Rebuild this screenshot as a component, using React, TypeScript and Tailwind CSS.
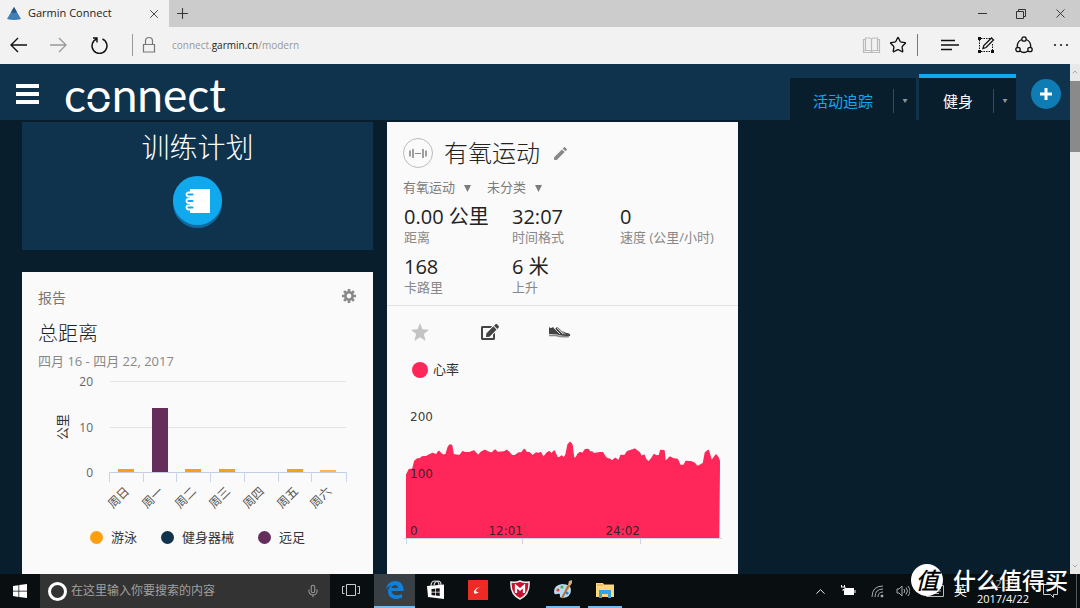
import type { ReactNode } from "react";
import { ChevronDown, ChevronUp, Mic, Plus, Star, X } from "lucide-react";
import { FaEdit } from "react-icons/fa";
import { MdEdit } from "react-icons/md";

const WEEK_DAYS = ["周日", "周一", "周二", "周三", "周四", "周五", "周六"];
const WEEK_TICKS = [87, 121, 154, 188, 222, 256, 289, 324];
const WEEK_BARS = [
  { x: 96, height: 3, color: "#ff9e0f" },
  { x: 130, height: 64, color: "#652d5c" },
  { x: 163, height: 3, color: "#ff9e0f" },
  { x: 197, height: 3, color: "#ff9e0f" },
  { x: 265, height: 3, color: "#ff9e0f" },
  { x: 298, height: 2, color: "#ffb54d" },
];

const WEEK_LEGEND = [
  { label: "游泳", dot: "bg-[#ff9e0f]" },
  { label: "健身器械", dot: "bg-[#10324b]" },
  { label: "远足", dot: "bg-[#652d5c]" },
];

const STATS = [
  { value: "0.00 公里", label: "距离" },
  { value: "32:07", label: "时间格式" },
  { value: "0", label: "速度 (公里/小时)" },
  { value: "168", label: "卡路里" },
  { value: "6 米", label: "上升" },
];

const HEART_RATE =
  "80,524 88,508 98,508 104,484 112,477 120,476 126,471 140,469 150,464 158,460 164,463 170,463 176,454 184,461 190,466 198,463 204,443 209,435 215,436 220,464 234,466 240,466 248,455 254,458 270,457 282,453 288,460 295,467 302,458 314,451 322,455 330,458 336,459 345,450 352,457 372,456 380,451 388,458 396,467 406,466 416,459 424,459 433,448 440,458 448,458 458,467 468,459 474,461 482,458 490,473 500,460 508,455 514,462 523,453 532,473 540,472 545,468 552,474 558,464 564,434 570,427 576,434 581,474 588,474 594,462 600,458 608,460 616,449 624,448 630,456 636,456 642,461 660,458 668,458 676,471 682,476 690,478 696,483 706,475 716,483 723,466 734,467 742,455 758,450 764,447 772,453 778,458 784,470 792,465 798,479 806,486 814,477 822,464 830,468 838,466 842,451 852,452 856,487 862,479 870,471 878,476 892,478 900,496 912,496 918,484 936,486 944,490 952,500 960,496 970,490 976,458 985,451 990,468 994,483 1000,476 1008,465 1014,472 1018,484";

function TabStrip() {
  return (
    <div className="flex h-[27px] shrink-0 bg-[#ccc]">
      <div className="flex w-[169px] items-center bg-[#f2f2f2] pl-[7px] pr-2">
        <svg width="14" height="13" viewBox="0 0 14 13" aria-hidden>
          <path d="M7 0 14 12Q7 14 0 12Z" fill="#3f7fb8" />
          <path d="M7 0 10 5Q7 7 4 5Z" fill="#28598c" />
        </svg>
        <span className="ml-[7px] flex-1 text-[11px] text-[#222]">Garmin Connect</span>
        <button type="button" aria-label="Close tab">
          <X size={14} strokeWidth={1.5} color="#333" />
        </button>
      </div>
      <button type="button" aria-label="New tab" className="ml-[5px]">
        <Plus size={17} strokeWidth={1.5} color="#333" />
      </button>
      <div className="ml-auto flex items-center gap-[27px] pr-3.5">
        <button type="button" aria-label="Minimize" className="w-3">
          <svg width="12" height="12" viewBox="0 0 12 12" stroke="#333" aria-hidden>
            <path d="M2 5.500h9" />
          </svg>
        </button>
        <button type="button" aria-label="Restore" className="w-3">
          <svg width="12" height="12" viewBox="0 0 12 12" fill="none" stroke="#333" aria-hidden>
            <path d="M1.500 3.500h7v7h-7zM3.500 3.500v-2h7v7h-2" />
          </svg>
        </button>
        <button type="button" aria-label="Close" className="flex w-3 justify-center">
          <X size={15} strokeWidth={1.5} color="#333" className="shrink-0" />
        </button>
      </div>
    </div>
  );
}

function AddressBar() {
  return (
    <div className="flex h-[37px] shrink-0 items-center bg-[#f2f2f2] pb-px pl-[9px] pr-[11px]">
      <button type="button" aria-label="Back">
        <svg width="19" height="18" viewBox="0 0 19 18" fill="none" stroke="#111" strokeWidth="1.400" aria-hidden>
          <path d="M18 9H2M9 2 2 9l7 7" />
        </svg>
      </button>
      <button type="button" aria-label="Forward" className="ml-[21px]">
        <svg width="19" height="18" viewBox="0 0 19 18" fill="none" stroke="#999" strokeWidth="1.300" aria-hidden>
          <path d="M1 9h16M10 2l7 7-7 7" />
        </svg>
      </button>
      <button type="button" aria-label="Refresh" className="ml-[22px]">
        <svg width="19" height="19" viewBox="0 0 19 19" fill="none" stroke="#111" strokeWidth="1.400" aria-hidden>
          <path d="M12.500 3A7.500 7.500 0 1 1 6.500 3M3 2h4v4.500" />
        </svg>
      </button>
      <span className="ml-[23px] h-[22px] w-px bg-[#999]" />
      <svg className="ml-[9px]" width="14" height="18" viewBox="0 0 14 18" fill="none" stroke="#777" strokeWidth="1.200" aria-hidden>
        <path d="M1.500 8.500h11v7.500h-11zM3.500 8.500V5q0-3.500 3.500-3.500T10.500 5v3.500" />
      </svg>
      <button type="button" className="ml-4 flex-1 text-left text-[10px] text-[#999]">
        connect.<span className="text-[#222]">garmin.cn</span>/modern
      </button>
      <button type="button" aria-label="Reading view">
        <svg width="19" height="18" viewBox="0 0 19 18" fill="none" stroke="#bbb" strokeWidth="1.200" aria-hidden>
          <path d="M1.500 3.500h2v11h-2zM15.500 3.500h2v11h-2M3.500 2h4q2 0 2 2v12q0-1.500-2-1.500h-4zM15.500 2h-4q-2 0-2 2v12q0-1.500 2-1.500h4zM1.500 14.500v2h16v-2" />
        </svg>
      </button>
      <button type="button" aria-label="Favorite" className="ml-2">
        <Star size={18} strokeWidth={1.8} strokeLinejoin="miter" color="#111" />
      </button>
      <span className="ml-2.5 h-[22px] w-px bg-[#777]" />
      <button type="button" aria-label="Hub" className="ml-[23px]">
        <svg width="18" height="18" viewBox="0 0 18 18" stroke="#111" strokeWidth="1.300" aria-hidden>
          <path d="M0 4.500h14M0 9h18M0 13.500h11" />
        </svg>
      </button>
      <button type="button" aria-label="Web note" className="ml-[18px]">
        <svg width="18" height="18" viewBox="0 0 18 18" fill="none" stroke="#111" aria-hidden>
          <path d="M2.500 4v11M15.500 8v7M4 2.500h9M4 15.500h10" strokeDasharray="1.500 1" />
          <path d="M6 12.500l.8-3L14.500 2l2 2-7.500 7.500z" strokeWidth="1.300" />
          <path d="M1 1h3v3H1zM1 14h3v3H1zM14 14h3v3h-3z" fill="#111" stroke="none" />
        </svg>
      </button>
      <button type="button" aria-label="Share" className="ml-5">
        <svg width="18" height="18" viewBox="0 0 18 18" fill="none" stroke="#111" strokeWidth="1.300" aria-hidden>
          <circle cx="9" cy="3" r="2.200" />
          <circle cx="3" cy="13.500" r="2.200" />
          <circle cx="15" cy="13.500" r="2.200" />
          <path d="M6.700 3.500Q2 5.500 2.300 11M11.300 3.500Q16 5.500 15.700 11M5 15q4 3 8 0" />
        </svg>
      </button>
      <button type="button" aria-label="More" className="ml-5">
        <svg width="16" height="4" viewBox="0 0 16 4" fill="#222" aria-hidden>
          <circle cx="2" cy="2" r="1.100" />
          <circle cx="8" cy="2" r="1.100" />
          <circle cx="14" cy="2" r="1.100" />
        </svg>
      </button>
    </div>
  );
}

function DashboardTab({ label, active }: { label: string; active?: boolean }) {
  return (
    <div
      className={
        active
          ? "flex h-[46px] items-center border-t-4 border-[#11a9ed] bg-[#091e2c] pl-6 pt-1"
          : "mr-[3px] flex h-[42px] items-center bg-[#091e2c] pl-[23px] pt-1"
      }
    >
      <a href="#dashboard" className={active ? "text-[15px] text-white" : "text-[15px] text-[#11a9ed]"}>
        {label}
      </a>
      <span className="ml-5 h-6 w-px bg-[#3b4a55]" />
      <button type="button" aria-label={`${label}选项`} className="w-[22px] text-[5px] text-[#8b979f]">
        ▼
      </button>
    </div>
  );
}

function Header() {
  return (
    <header className="flex h-14 shrink-0 items-end bg-[#0f334c] pr-[9px]">
      <button type="button" aria-label="菜单" className="mb-4 ml-4 flex w-[23px] flex-col gap-1">
        <span className="h-1 bg-white" />
        <span className="h-1 bg-white" />
        <span className="h-1 bg-white" />
      </button>
      <a href="#home" className="ml-[25px] font-['Lato',sans-serif] text-[46px] leading-[50px] text-white">
        c
        <span className="relative">
          o
          <span className="absolute inset-x-0 top-8 h-[3px] bg-[#0f334c]" />
        </span>
        nnect
      </a>
      <nav className="ml-auto flex items-end">
        <DashboardTab label="活动追踪" />
        <DashboardTab label="健身" active />
      </nav>
      <button
        type="button"
        aria-label="添加"
        className="mb-[11px] ml-[15px] flex size-[30px] items-center justify-center rounded-full bg-[#0f7db3]"
      >
        <svg width="12" height="12" viewBox="0 0 12 12" stroke="#fff" strokeWidth="3" aria-hidden>
          <path d="M6 0v12M0 6h12" />
        </svg>
      </button>
    </header>
  );
}

function TrainingCard() {
  return (
    <section className="flex h-32 flex-col items-center bg-[#0f334c] pt-[7px]">
      <h2 className="text-[28px] font-light leading-9 text-white">训练计划</h2>
      <button
        type="button"
        aria-label="训练计划"
        className="mt-[11px] flex size-[49px] items-center justify-center rounded-full bg-[#11a9ed] shadow-[0_3px_0_#1269a0]"
      >
        <svg width="26" height="26" viewBox="0 0 26 26" aria-hidden>
          <path d="M5 1h20v24H5z" fill="#fff" />
          <g fill="#11a9ed" stroke="#fff" strokeWidth="1.800">
            <rect x="1.500" y="4.500" width="8" height="4" rx="2" />
            <rect x="1.500" y="11" width="8" height="4" rx="2" />
            <rect x="1.500" y="17.500" width="8" height="4" rx="2" />
          </g>
        </svg>
      </button>
    </section>
  );
}

function WeekChart() {
  return (
    <svg className="mt-0.5 h-[150px] w-full" viewBox="0 0 351 150" role="img" aria-label="总距离">
      <path d="M88 9.500h236M88 55.500h236" stroke="#e3e3e3" />
      {WEEK_BARS.map((bar) => (
        <rect key={bar.x} x={bar.x} y={100 - bar.height} width="16" height={bar.height} fill={bar.color} />
      ))}
      <path d="M87 100.500h238" stroke="#c3cfe6" />
      {WEEK_TICKS.map((x) => (
        <path key={x} d={`M${x}.500 100v10`} stroke="#c9d5ea" />
      ))}
      <g fill="#666" fontSize="12" textAnchor="end">
        <text x="71" y="14">20</text>
        <text x="71" y="60">10</text>
        <text x="71" y="105">0</text>
      </g>
      <text x="41" y="55" fontSize="13" fill="#333" textAnchor="middle" transform="rotate(-90 41 55)" dy="4">
        公里
      </text>
      <g fill="#555" fontSize="12" textAnchor="end">
        {WEEK_DAYS.map((day, i) => {
          const x = 108 + Math.round(i * 33.7);
          return (
            <text key={day} x={x} y="120" transform={`rotate(-45 ${x} 120)`}>
              {day}
            </text>
          );
        })}
      </g>
    </svg>
  );
}

function GearIcon() {
  return (
    <svg width="14" height="14" viewBox="0 0 14 14" fill="none" stroke="#888" aria-hidden>
      <circle cx="7" cy="7" r="3.700" strokeWidth="2.600" />
      <path d="M7 0v2.500M7 11.500V14M0 7h2.500M11.500 7H14M2.100 2.100l1.800 1.800M10.100 10.100l1.800 1.800M2.100 11.900l1.800-1.800M10.100 3.900l1.800-1.800" strokeWidth="2.600" />
    </svg>
  );
}

function ReportCard() {
  return (
    <section className="flex-1 bg-[#fafafa] pt-4">
      <div className="flex h-[18px] items-center justify-between pl-4 pr-[17px]">
        <h3 className="text-[14px] text-[#777]">报告</h3>
        <button type="button" aria-label="设置" className="mb-0.5">
          <GearIcon />
        </button>
      </div>
      <h2 className="mt-3.5 px-4 text-xl font-light leading-7 text-[#222]">总距离</h2>
      <p className="mt-1 px-4 text-[13px] leading-[18px] text-[#888]">四月 16 - 四月 22, 2017</p>
      <WeekChart />
      <ul className="mt-[5px] flex justify-center gap-6 text-[13px] leading-5 text-[#333]">
        {WEEK_LEGEND.map((item) => (
          <li key={item.label} className="flex items-center gap-2">
            <span className={`size-[13px] rounded-full ${item.dot}`} />
            {item.label}
          </li>
        ))}
      </ul>
    </section>
  );
}

function TypeSelect({ label, value }: { label: string; value: string }) {
  return (
    <label className="flex items-center gap-2">
      <select aria-label={label} className="appearance-none">
        <option>{value}</option>
      </select>
      <svg width="7" height="7" viewBox="0 0 7 7" fill="#7c7c7c" aria-hidden>
        <path d="M0 0h7L3.500 7z" />
      </svg>
    </label>
  );
}

function HeartRateChart() {
  return (
    <svg className="h-[190px] w-full" viewBox="0 0 351 190" role="img" aria-label="心率">
      <svg x="19" y="60" width="314" height="98" viewBox="78 420 942 294">
        <polygon
          points={`80,714 ${HEART_RATE} 1016,714`}
          fill="#ff2659"
          stroke="#ff2659"
          strokeWidth="4"
          strokeLinejoin="round"
        />
      </svg>
      <path d="M17 158.500h318M19.500 159v5M135.500 159v5M253.500 159v5" stroke="#c9d3ec" />
      <g fill="#222" fillOpacity="0.9" fontSize="12" className="font-['DejaVu_Sans',sans-serif]">
        <text x="23" y="41">200</text>
        <text x="23" y="98">100</text>
        <text x="23" y="155">0</text>
        <text x="136" y="155" textAnchor="end">12:01</text>
        <text x="253" y="155" textAnchor="end">24:02</text>
      </g>
    </svg>
  );
}

function ActivityCard() {
  return (
    <section className="h-full bg-[#fafafa] pt-4">
      <div className="flex h-[30px] items-center px-4">
        <span className="flex size-[30px] items-center justify-center rounded-full border border-[#bbb]">
          <svg width="18" height="11" viewBox="0 0 18 11" stroke="#888" aria-hidden>
            <path d="M6 5.500h6" />
            <path d="M1 2.500v6M4 1v9M14 1v9M17 2.500v6" strokeWidth="1.600" />
          </svg>
        </span>
        <h2 className="ml-[11px] text-2xl font-light text-[#222]">有氧运动</h2>
        <button type="button" aria-label="编辑名称" className="ml-3">
          <MdEdit size={17} color="#888" />
        </button>
      </div>
      <div className="mt-2.5 flex h-5 items-center gap-4 px-4 text-[13px] text-[#7c7c7c]">
        <TypeSelect label="活动类型" value="有氧运动" />
        <TypeSelect label="赛事类型" value="未分类" />
      </div>
      <dl className="mt-2 grid grid-cols-[108px_108px_1fr] gap-y-2.5 border-b border-[#e3e3e3] pb-[9px] pl-[17px]">
        {STATS.map((stat) => (
          <div key={stat.label} className="flex flex-col-reverse whitespace-nowrap">
            <dt className="text-[13px] leading-[18px] text-[#888]">{stat.label}</dt>
            <dd className="text-xl leading-[22px] text-[#222]">{stat.value}</dd>
          </div>
        ))}
      </dl>
      <div className="flex h-[52px] items-center pl-6">
        <button type="button" aria-label="收藏">
          <svg width="18" height="18" viewBox="0 0 18 18" fill="#c4c4c4" aria-hidden>
            <path d="M9 0l2.400 6.300L18 6.800l-5.100 4.200L14.600 18 9 14.200 3.400 18l1.700-7L0 6.800l6.600-.5z" />
          </svg>
        </button>
        <button type="button" aria-label="编辑" className="ml-[52px]">
          <FaEdit size={18} color="#444" />
        </button>
        <button type="button" aria-label="装备" className="ml-[49px]">
          <svg width="23" height="14" viewBox="0 0 23 14" aria-hidden>
            <path d="M1 2q2 2 4 0l2 2 2-2 5 4q4 2 7 2.500 2 1 1 2.500-8 0-13-1.500L1 9z" fill="#444" />
            <path d="M6 3l6 6M9 3l6 6M12 4.500l5 5" stroke="#fafafa" strokeWidth="0.800" />
            <path d="M1 10.500h7q6 2 13 1" stroke="#888" strokeWidth="1.500" fill="none" />
          </svg>
        </button>
      </div>
      <div className="flex h-6 items-center gap-[5px] pl-[25px] text-[13px] text-[#333]">
        <span className="size-4 rounded-full bg-[#ff2659]" />
        心率
      </div>
      <div className="-mt-0.5">
        <HeartRateChart />
      </div>
    </section>
  );
}

function Scrollbar() {
  return (
    <div className="flex w-2.5 shrink-0 flex-col items-center bg-[#e8e8e8]" aria-hidden>
      <ChevronUp size={8} color="#888" className="mb-[5px] mt-1" />
      <div className="h-[71px] w-full bg-[#8a8a8a]" />
      <ChevronDown size={8} color="#888" className="mb-1 mt-auto" />
    </div>
  );
}

function TaskButton({ label, className = "", children }: { label: string; className?: string; children: ReactNode }) {
  return (
    <button
      type="button"
      aria-label={label}
      className={`flex items-center justify-center border-b-2 ${className || "w-[42px] border-transparent"}`}
    >
      {children}
    </button>
  );
}

function Taskbar() {
  return (
    <footer className="relative flex h-[34px] shrink-0 bg-[#090e11] text-white">
      <button type="button" aria-label="Start" className="flex w-10 items-center justify-center">
        <svg width="14" height="14" viewBox="0 0 14 14" fill="#fff" aria-hidden>
          <path d="M0 2l5.500-.8v5.500H0zM6.200 1.100 14 0v6.700H6.200zM0 7.400h5.500v5.500L0 12.100zM6.200 7.400H14V14l-7.800-1.100z" />
        </svg>
      </button>
      <label className="flex w-[290px] items-center bg-[#333] pl-2 pr-2.5">
        <span className="size-[19px] rounded-full border-[3px] border-white" />
        <input
          type="text"
          aria-label="搜索"
          placeholder="在这里输入你要搜索的内容"
          className="ml-1 min-w-0 flex-1 bg-transparent text-[12px] outline-none placeholder:text-[#a0a0a0]"
        />
        <Mic size={14} color="#999" strokeWidth={1.8} />
      </label>
      <TaskButton label="Task view">
        <svg width="18" height="14" viewBox="0 0 18 14" fill="none" stroke="#ccc" aria-hidden>
          <path d="M4.500 1.500h9v11h-9zM2.500 3.500h-2v7h2M15.500 3.500h2v7h-2" />
        </svg>
      </TaskButton>
      <TaskButton label="Edge" className="ml-0.5 w-[41px] border-[#76b9ed] bg-[#384046]">
        <svg width="18" height="18" viewBox="0 0 18 18" aria-hidden>
          <path
            d="M0 8C1 3 4.500 0 9 0c6 0 9 4 8.500 10H5.500c.3 4.500 6 5.500 10.500 3v3.500c-7 3.500-14 .5-14-6 0-3 1.500-5 4-6C3.500 4.800 1.200 6 0 8zM5.600 7h6.400c0-4-5.800-4-6.400 0z"
            fill="#0f7fdc"
          />
        </svg>
      </TaskButton>
      <TaskButton label="Store">
        <svg width="20" height="20" viewBox="0 0 20 20" aria-hidden>
          <path d="M1 6l17-1.500V19L2 17z" fill="#fff" />
          <path d="M5 6q0-5 4-5t4 4M8 5q1-4 4-4 3 0 3 4" fill="none" stroke="#ddd" strokeWidth="1.200" />
          <path d="M5.500 9l3.500-.3v3H5.500zM9.700 8.600l4-.4v3.500h-4zM5.500 12.400H9v3l-3.500-.3zM9.700 12.400h4V16l-4-.5z" fill="#111" />
        </svg>
      </TaskButton>
      <TaskButton label="Media">
        <svg width="20" height="20" viewBox="0 0 20 20" aria-hidden>
          <path d="M0 0h20v20H0z" fill="#ee2a24" />
          <path d="M15 6q-5 1-7 4-1 2 3 2-4 3-5 1-1-3 4-5.500z" fill="#fff" />
        </svg>
      </TaskButton>
      <TaskButton label="McAfee">
        <svg width="20" height="20" viewBox="0 0 20 20" aria-hidden>
          <path d="M1 2q5 1 9-1 4 2 9 1 1 12-9 17Q0 14 1 2z" fill="#c8102e" stroke="#eee" strokeWidth="1.500" />
          <path d="M6 13V6l4 3.500L14 6v7" fill="none" stroke="#fff" strokeWidth="2.300" />
        </svg>
      </TaskButton>
      <TaskButton label="Paint" className="ml-[5px] w-[34px] border-[#76b9ed]">
        <svg width="20" height="20" viewBox="0 0 20 20" aria-hidden>
          <path d="M1 12Q1 5 9 4q9 0 9 6 0 7-8 8-4 0-3-3 0-2-3-1-3 1-3-2z" fill="#b9d9ee" />
          <circle cx="5" cy="10" r="1.600" fill="#e0483a" />
          <circle cx="9" cy="7" r="1.600" fill="#4caf50" />
          <circle cx="14" cy="8" r="1.600" fill="#f3b52c" />
          <circle cx="14" cy="13" r="1.600" fill="#2f7fd0" />
          <path d="M9 18 16 5" stroke="#b0713a" strokeWidth="2" />
          <path d="M15 5l1-4 3-1v3l-2 3z" fill="#dcae72" />
        </svg>
      </TaskButton>
      <TaskButton label="Explorer" className="ml-2 w-[34px] border-[#76b9ed]">
        <svg width="20" height="16" viewBox="0 0 20 16" aria-hidden>
          <path d="M1 1h7l1 1.500h10V15H1z" fill="#f9d978" />
          <path d="M2 3h6" stroke="#e0a93a" />
          <path d="M4 8h12v8h-3v-4H7v4H4z" fill="#3ba3dc" />
        </svg>
      </TaskButton>
      <div className="ml-auto flex items-center pr-[3px]">
        <ChevronUp size={15} strokeWidth={1.5} />
        <svg className="ml-3" width="16" height="12" viewBox="0 0 16 12" aria-hidden>
          <path d="M5 3h9v7H4V6z" fill="#fff" />
          <path d="M15 5v3M1 2h4v2.500H3V6M1.500 0v2M4.500 0v2" stroke="#fff" fill="none" />
        </svg>
        <svg className="ml-[15px]" width="13" height="13" viewBox="0 0 13 13" fill="none" stroke="#aaa" aria-hidden>
          <path d="M1 12Q1 1 12 1M4 12q0-8 8-8M7 12q0-5 5-5" />
          <circle cx="11" cy="11" r="1" fill="#fff" />
        </svg>
        <svg className="ml-3" width="14" height="12" viewBox="0 0 14 12" fill="none" stroke="#aaa" aria-hidden>
          <path d="M1 4h2l3-3v10L3 8H1zM8 4q1.500 2 0 4M10 2.500q3 3.500 0 7M12 1q4 5 0 10" />
        </svg>
        <svg className="ml-4" width="18" height="12" viewBox="0 0 18 12" fill="none" stroke="#bbb" aria-hidden>
          <path d="M.5.500h17v11H.5zM3 3.500h12M3 6h12M5 8.500h8" />
        </svg>
        <span className="ml-2.5 text-[13px]">英</span>
        <div className="ml-2.5 text-center text-[11px] leading-[15px]">
          <p className="text-[#aaa]">12:35</p>
          <p>2017/4/22</p>
        </div>
        <svg className="ml-3.5" width="15" height="14" viewBox="0 0 15 14" fill="none" stroke="#ccc" aria-hidden>
          <path d="M.5.500h14v10h-4v3l-3-3h-7z" />
        </svg>
        <span className="ml-[18px] h-[34px] w-px bg-[#555]" />
      </div>
      <div className="absolute -top-2.5 right-3 flex items-center gap-2.5">
        <span className="flex size-8 items-center justify-center rounded-full bg-white text-[23px] font-medium italic leading-8 text-black">
          值
        </span>
        <span className="text-[23px] font-medium leading-8">什么值得买</span>
      </div>
    </footer>
  );
}

export default function App() {
  return (
    <div className="flex h-screen flex-col overflow-hidden font-['Open_Sans','Noto_Sans_CJK_SC',sans-serif]">
      <TabStrip />
      <AddressBar />
      <div className="flex min-h-0 flex-1">
        <div className="flex min-w-0 flex-1 flex-col bg-[#091e2c]">
          <Header />
          <main className="flex min-h-0 flex-1 gap-3.5 overflow-hidden pl-[22px] pt-0.5">
            <div className="flex max-w-[351px] flex-1 flex-col gap-[22px]">
              <TrainingCard />
              <ReportCard />
            </div>
            <div className="max-w-[351px] flex-1">
              <ActivityCard />
            </div>
          </main>
        </div>
        <Scrollbar />
      </div>
      <Taskbar />
    </div>
  );
}
